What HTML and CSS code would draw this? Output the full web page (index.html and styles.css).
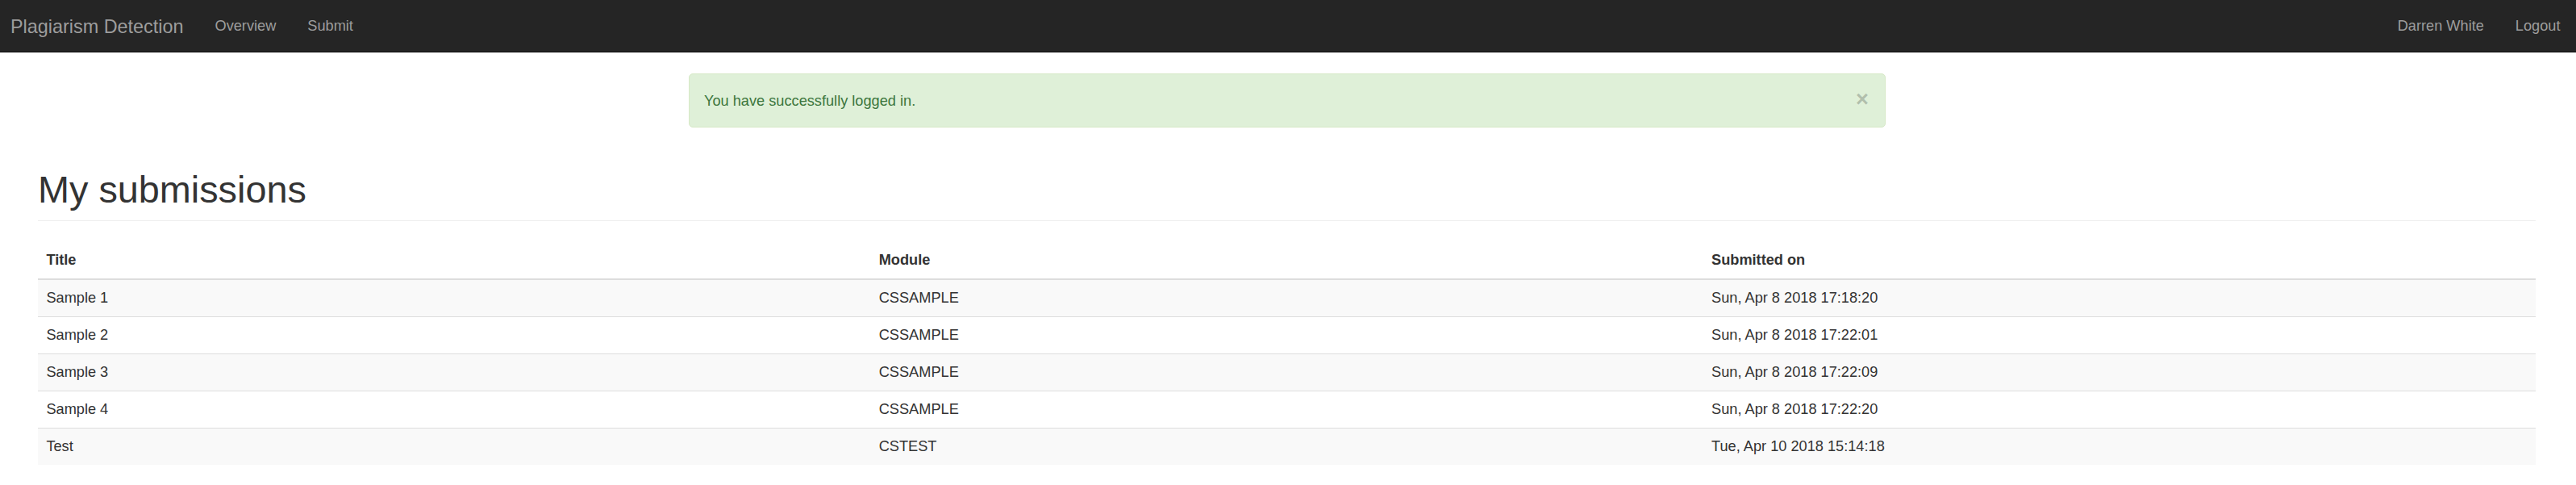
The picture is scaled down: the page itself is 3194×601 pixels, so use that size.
FILE: index.html
```html
<!DOCTYPE html>
<html lang="en">
<head>
<meta charset="utf-8">
<title>Plagiarism Detection</title>
<link rel="stylesheet" href="styles.css">
</head>
<body>
<nav class="navbar">
  <div class="nav-left">
    <a class="brand" href="#">Plagiarism Detection</a>
    <ul class="nav">
      <li><a href="#">Overview</a></li>
      <li><a href="#">Submit</a></li>
    </ul>
  </div>
  <ul class="nav">
    <li><a href="#">Darren White</a></li>
    <li><a href="#">Logout</a></li>
  </ul>
</nav>
<main class="content">
  <div class="alert">
    <span class="alert-text">You have successfully logged in.</span>
    <button class="close" type="button">&times;</button>
  </div>
  <div class="page-header">
    <h1 class="title">My submissions</h1>
  </div>
  <table class="table">
    <thead>
      <tr><th>Title</th><th>Module</th><th>Submitted on</th></tr>
    </thead>
    <tbody>
      <tr><td>Sample 1</td><td>CSSAMPLE</td><td>Sun, Apr 8 2018 17:18:20</td></tr>
      <tr><td>Sample 2</td><td>CSSAMPLE</td><td>Sun, Apr 8 2018 17:22:01</td></tr>
      <tr><td>Sample 3</td><td>CSSAMPLE</td><td>Sun, Apr 8 2018 17:22:09</td></tr>
      <tr><td>Sample 4</td><td>CSSAMPLE</td><td>Sun, Apr 8 2018 17:22:20</td></tr>
      <tr><td>Test</td><td>CSTEST</td><td>Tue, Apr 10 2018 15:14:18</td></tr>
    </tbody>
  </table>
</main>
</body>
</html>
```
FILE: styles.css
```css
* { box-sizing: border-box; }

html, body {
  margin: 0;
  padding: 0;
  background: #fff;
}

body {
  font-family: "Liberation Sans", Arial, Helvetica, sans-serif;
  font-size: 18.2px;
  line-height: 26px;
  color: #333;
}

a { text-decoration: none; }

.navbar {
  display: flex;
  justify-content: space-between;
  align-items: stretch;
  height: 65px;
  background: #252525;
  border-bottom: 1px solid #080808;
}

.nav-left {
  display: flex;
  align-items: stretch;
}

.brand {
  display: block;
  font-size: 23.4px;
  line-height: 62px;
  padding: 2px 19.5px 0 13px;
  color: #9d9d9d;
}

.nav {
  display: flex;
  list-style: none;
  margin: 0;
  padding: 0;
}

.nav a {
  display: block;
  padding: 0 19.5px;
  line-height: 64px;
  color: #9d9d9d;
}

.content {
  padding: 26px 50px 0 47px;
}

.alert {
  display: flex;
  justify-content: space-between;
  width: 1484px;
  margin: 0 auto 52px;
  padding: 19.5px 19.5px 19.5px 18.5px;
  background: #dff0d8;
  border: 1px solid #d6e9c6;
  border-radius: 5px;
  color: #3c763d;
}

.close {
  align-self: flex-start;
  margin: -2.6px 0 0 0;
  padding: 0;
  border: 0;
  background: transparent;
  font-family: inherit;
  font-size: 27.3px;
  font-weight: bold;
  line-height: 1;
  color: #000;
  opacity: 0.2;
  text-shadow: 0 1px 0 #fff;
  cursor: pointer;
}

.page-header {
  padding-bottom: 11.7px;
  border-bottom: 1px solid #eee;
  margin-bottom: 26px;
}

.title {
  margin: 0;
  font-size: 46.8px;
  font-weight: 500;
  line-height: 1.1;
  color: #333;
}

.table {
  width: 100%;
  table-layout: fixed;
  border-collapse: collapse;
  border-spacing: 0;
}

.table th,
.table td {
  text-align: left;
  padding: 10px 10.4px;
  line-height: 25px;
  vertical-align: top;
}

.table th {
  font-weight: bold;
  border-bottom: 2px solid #ddd;
}

.table td {
  border-top: 1px solid #ddd;
}

.table tbody tr:nth-child(odd) {
  background: #f9f9f9;
}
```
